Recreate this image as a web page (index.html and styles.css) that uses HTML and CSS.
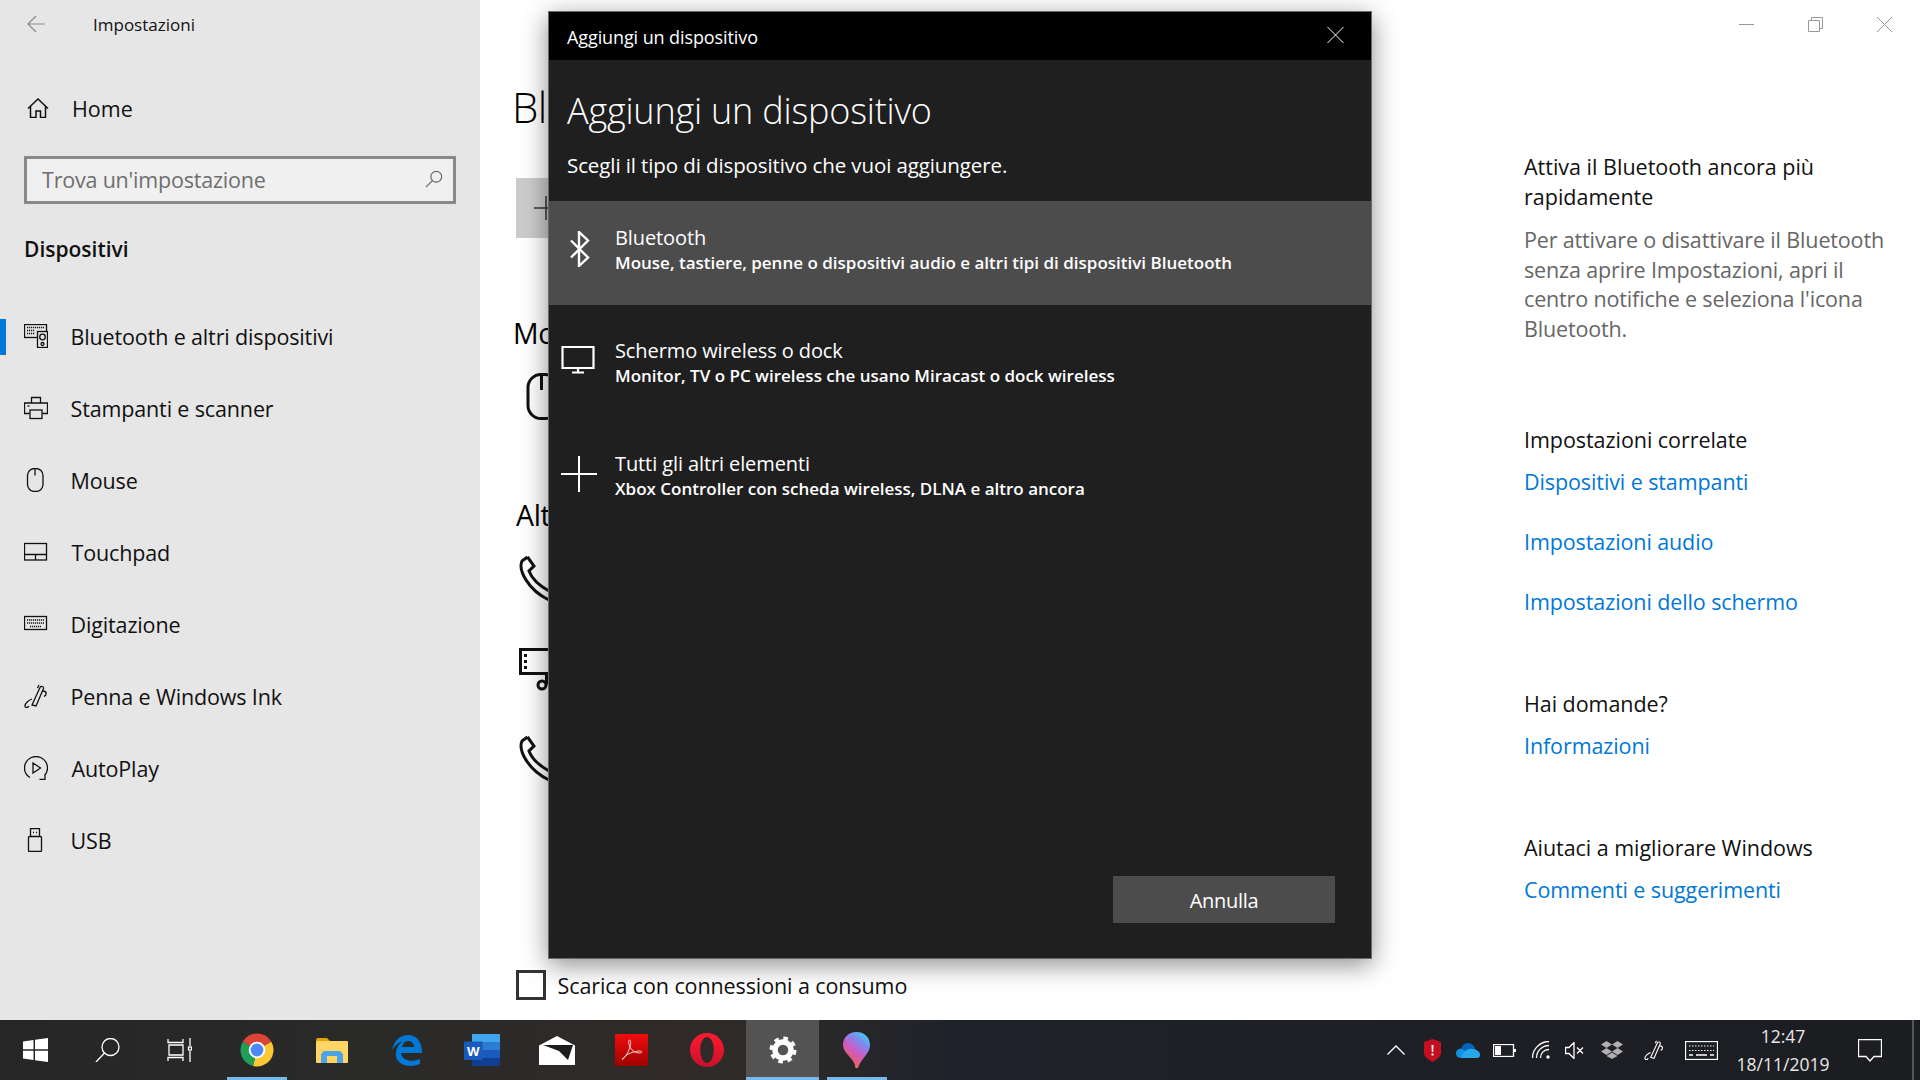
FILE: index.html
```html
<!DOCTYPE html>
<html lang="it">
<head>
<meta charset="utf-8">
<title>Impostazioni</title>
<link rel="stylesheet" href="styles.css">
</head>
<body>
<div class="window">
  <nav class="sidebar">
    <div class="app-head">
      <svg class="back" viewBox="0 0 18 18"><path d="M18 9H1M9 1L1 9l8 8"/></svg>
      <span class="app-name">Impostazioni</span>
    </div>
    <div class="home-row">
      <svg class="ico-home" viewBox="0 0 22 20"><path d="M1 10.500L11 1l10 9.500M3.500 8.500V19.500H9V13h4.500V19.500H18.500V8.500"/></svg>
      <span>Home</span>
    </div>
    <div class="search"><span>Trova un'impostazione</span>
      <svg class="ico-search" viewBox="0 0 20 20"><circle cx="12.500" cy="7.500" r="6"/><path d="M8 12L1 19"/></svg>
    </div>
    <h2 class="group">Dispositivi</h2>
    <ul class="nav">
      <li class="nav-item active">
        <svg class="nav-ico" viewBox="0 0 24 24"><rect x=".5" y=".5" width="22" height="13"/><path class="dots" d="M3 3.500h17M3 6.500h8M3 9.500h8"/><rect class="solid" x="13.500" y="7.500" width="10" height="16"/><circle cx="18.500" cy="13" r="2.800"/><circle cx="18.500" cy="20" r="1.500"/></svg>
        <span>Bluetooth e altri dispositivi</span>
      </li>
      <li class="nav-item">
        <svg class="nav-ico" viewBox="0 0 24 24"><path d="M7.500 7V1.500h9V7M5.500 17.500H.5v-10.500h23v10.500H18.500"/><rect x="6" y="14" width="12" height="8.500"/><path d="M3.500 10h2"/></svg>
        <span>Stampanti e scanner</span>
      </li>
      <li class="nav-item">
        <svg class="nav-ico" viewBox="0 0 24 24"><rect x="3.500" y=".5" width="15.500" height="23" rx="7"/><path d="M11 .5v7"/></svg>
        <span>Mouse</span>
      </li>
      <li class="nav-item tp">
        <svg class="nav-ico" viewBox="0 0 24 24"><rect x=".5" y="3.500" width="22" height="16.500"/><path d="M.5 14.500h22M11.500 14.500V20"/></svg>
        <span>Touchpad</span>
      </li>
      <li class="nav-item">
        <svg class="nav-ico" viewBox="0 0 24 24"><rect x=".5" y="4.500" width="22" height="13"/><path class="dots" d="M3 8h17M3 11h17M6 14.500h11"/></svg>
        <span>Digitazione</span>
      </li>
      <li class="nav-item">
        <svg class="nav-ico" viewBox="0 0 24 24"><path d="M8 21L16 3.500c1-2 4-1 3.500 1L12 22l-4-1zM15 1l-1.500 3M19 7c4 0 4 4 1 5.500M8 15c-3 1-7 4-7 7 0 2 3 2 4 0"/></svg>
        <span>Penna e Windows Ink</span>
      </li>
      <li class="nav-item tp">
        <svg class="nav-ico" viewBox="0 0 24 24"><path d="M6 21.500C2.500 19.500.5 16 .5 12a11.500 11.500 0 0 1 23 0c0 3-1 5.500-3 7.500M9 7l7.500 5L9 17zM15.500 23.500h5.500V18"/></svg>
        <span>AutoPlay</span>
      </li>
      <li class="nav-item">
        <svg class="nav-ico" viewBox="0 0 24 24"><rect x="4.500" y="8.500" width="13" height="15" rx="1"/><path d="M6.500 8.500V.5h9v8M9 4.500h1M12 4.500h1"/></svg>
        <span>USB</span>
      </li>
    </ul>
  </nav>

  <main class="content">
    <section class="page">
      <h1 class="page-title">Bluetooth e altri dispositivi</h1>
      <div class="add-btn">
        <svg class="ico-plus" viewBox="0 0 24 24"><path d="M0 12h24M12 0v24"/></svg>
        <span>Aggiungi dispositivo Bluetooth o di altro tipo</span>
      </div>
      <h2 class="section first">Mouse, tastiera e penna</h2>
      <svg class="dev-mouse" viewBox="0 0 30 47"><rect x="1.500" y="1.500" width="30" height="44" rx="13"/><path d="M15 1.500V17"/></svg>
      <h2 class="section second">Altri dispositivi</h2>
      <svg class="dev dev-a" viewBox="0 0 48 48"><path d="M8.500 2L3 6C-1 15 9 35 30 45M8.500 2L15 11 10 16C13 24 21 31 30 36"/></svg>
      <svg class="dev dev-b" viewBox="0 0 48 48"><path d="M1.500 1.500h40v24h-40zM6.500 6v3M6.500 12v3M6.500 18v3M27.500 25.500v11"/><circle cx="23" cy="37" r="4"/></svg>
      <svg class="dev dev-c" viewBox="0 0 48 48"><path d="M8.500 2L3 6C-1 15 9 35 30 45M8.500 2L15 11 10 16C13 24 21 31 30 36"/></svg>
      <label class="check"><span class="box"></span><span>Scarica con connessioni a consumo</span></label>
      <p class="peek">Per evitare addebiti, lascia questa opzione disattivata: il software del dispositivo non verrà scaricato</p>
    </section>
    <aside class="side">
      <div class="caption">
        <svg class="cap" viewBox="0 0 15 15"><path d="M0 7.500h15"/></svg>
        <svg class="cap" viewBox="0 0 15 15"><path d="M.5 3.500h11v11H.5zM3.500 3.500V.5h11v11h-3"/></svg>
        <svg class="cap" viewBox="0 0 15 15"><path d="M0 0l15 15M15 0L0 15"/></svg>
      </div>
      <h3 class="tip-title">Attiva il Bluetooth ancora più rapidamente</h3>
      <p class="tip-body">Per attivare o disattivare il Bluetooth senza aprire Impostazioni, apri il centro notifiche e seleziona l'icona Bluetooth.</p>
      <h3 class="side-h related">Impostazioni correlate</h3>
      <a class="side-link">Dispositivi e stampanti</a>
      <a class="side-link">Impostazioni audio</a>
      <a class="side-link">Impostazioni dello schermo</a>
      <h3 class="side-h">Hai domande?</h3>
      <a class="side-link">Informazioni</a>
      <h3 class="side-h">Aiutaci a migliorare Windows</h3>
      <a class="side-link">Commenti e suggerimenti</a>
    </aside>
  </main>
</div>

<footer class="taskbar">
  <div class="sys"><svg class="tb-win" viewBox="0 0 25 24"><path d="M0 3.400L10.500 1.900V11.300H0zM12 1.700L25 0V11.300H12zM0 12.700H10.500V22.100L0 20.600zM12 12.700H25V24L12 22.300z"/></svg></div>
  <div class="sys"><svg class="tb-line" viewBox="0 0 25 24"><circle cx="15.500" cy="9" r="8.500"/><path d="M9.500 15L1 24"/></svg></div>
  <div class="sys"><svg class="tb-line" viewBox="0 0 25 24"><path d="M1 1v3.500h15V1M2 7h14v10H2zM1 23v-3.500h15V23M23 0v8M23 13v11"/><rect x="21.500" y="9" width="3" height="3"/></svg></div>
  <div class="apps">
    <div class="app run">
      <svg class="i-chrome" viewBox="0 0 34 34"><path fill="#db4437" d="M17 17L2.700 8.700A16.500 16.500 0 0 1 31.300 8.700Z"/><path fill="#fcc934" d="M17 17L31.300 8.700A16.500 16.500 0 0 1 13 33Z"/><path fill="#1e9e56" d="M17 17L13 33A16.500 16.500 0 0 1 2.700 8.700Z"/><circle fill="#fff" cx="17" cy="17" r="8.300"/><circle fill="#4a8af4" cx="17" cy="17" r="6.400"/></svg>
    </div>
    <div class="app">
      <svg class="i-folder" viewBox="0 0 32 25"><path fill="#e2a40c" d="M0 2a2 2 0 0 1 2-2h9l3 3h-14z"/><rect fill="#ffd665" y="3" width="32" height="22" rx="1"/><path fill="#4aa5e8" d="M5 25V16l3-3h16l3 3v9h-6v-7h-10v7z"/><rect fill="#ffd665" x="11" y="18" width="10" height="7"/></svg>
    </div>
    <div class="app">
      <svg class="i-edge" viewBox="0 0 30 31"><path fill="#0078d7" fill-rule="evenodd" d="M0 15C2 5 9 0 16 0c9 0 14 7 14 18H9c1 7 9 10 19 6v5c-12 5-26 0-24-12 1-6 4-9 8-11-5 1-9 4-12 9zM10 12h12c0-4-3-6-6-6s-5 2-6 6z"/></svg>
    </div>
    <div class="app">
      <svg class="i-word" viewBox="0 0 36 32"><rect fill="#41a5ee" x="8" width="28" height="8"/><rect fill="#2b7cd3" x="8" y="8" width="28" height="8"/><rect fill="#185abd" x="8" y="16" width="28" height="8"/><rect fill="#103f91" x="8" y="24" width="28" height="8"/><rect fill="#185abd" y="7.500" width="18.500" height="18.500" rx="1"/><text class="w-letter" x="9.200" y="22">W</text></svg>
    </div>
    <div class="app">
      <svg class="i-mail" viewBox="0 0 36 29"><path fill="#fff" d="M18 0L36 9.500V29H0V9.500z"/><path fill="#1c1c1c" d="M4 9H34L29 24 20 15z"/></svg>
    </div>
    <div class="app">
      <svg class="i-acro" viewBox="0 0 33 33"><defs><linearGradient id="ag" x1="0" y1="0" x2="0" y2="1"><stop offset="0" stop-color="#f10d0c"/><stop offset="1" stop-color="#a00000"/></linearGradient></defs><rect fill="url(#ag)" width="33" height="32"/><path class="acro-s" d="M7 25c3-1 6-6 8-12 1-3 1-7-.5-7s-1 5 1 8c2 3 5 5 9 5 3 0 3-2 0-2-5 0-13 3-15 6-1 2-2 3-2.500 2z"/></svg>
    </div>
    <div class="app">
      <svg class="i-opera" viewBox="0 0 34 34"><defs><linearGradient id="og" x1="0" y1="0" x2="0" y2="1"><stop offset="0" stop-color="#ff1b2d"/><stop offset="1" stop-color="#c8102e"/></linearGradient></defs><circle fill="url(#og)" cx="17" cy="17" r="17"/><ellipse fill="#2f2a27" cx="17" cy="17" rx="6.800" ry="13"/></svg>
    </div>
    <div class="app run active">
      <svg class="i-gear" viewBox="0 0 28 28"><circle class="g-ring" cx="14" cy="14" r="8"/><circle class="g-teeth" cx="14" cy="14" r="11.500"/></svg>
    </div>
    <div class="app run">
      <svg class="i-paint" viewBox="0 0 27 36"><defs><linearGradient id="pg" x1=".9" y1="0" x2=".3" y2="1"><stop offset="0" stop-color="#35e0e8"/><stop offset=".3" stop-color="#7a8cf2"/><stop offset=".6" stop-color="#d05ac0"/><stop offset=".85" stop-color="#e8606a"/><stop offset="1" stop-color="#f4a020"/></linearGradient></defs><path fill="url(#pg)" d="M13.500 0C22 0 27 6 27 13 27 22 18 26 15 36h-2.500C12 26 0 22 0 13 0 6 5 0 13.500 0z"/></svg>
    </div>
  </div>
  <div class="tray">
    <div class="t36"><svg class="i-chev" viewBox="0 0 18 10"><path d="M.5 9.500L9 1l8.500 8.500"/></svg></div>
    <div class="t36"><svg class="i-shield" viewBox="0 0 17 23"><path fill="#c50f1f" d="M8.500 0L17 3V14C17 18 12 21 8.500 23 5 21 0 18 0 14V3z"/><path fill="#fff" d="M7.500 6h2l-.300 7H7.800zM7.500 14.500h2v2h-2z"/></svg></div>
    <div class="t36"><svg class="i-cloud" viewBox="0 0 24 15"><path fill="#0364b8" d="M5 7C5 3 8 0 12 0c3 0 6 2 7 5v3H6z"/><path fill="#1490df" d="M5 15C1 15 0 12 0 10c0-3 3-5 6-4l4 3-3 6z"/><path fill="#28a8ea" d="M5 15c2-6 6-10 11-9 2 0 8 1 8 6 0 2-1 3-3 3z"/></svg></div>
    <div class="t36"><svg class="i-batt" viewBox="0 0 23 13"><rect class="ln" x=".5" y=".5" width="20" height="12"/><rect fill="#fff" x="2" y="2" width="6" height="9"/><rect fill="#fff" x="21" y="5" width="2" height="3"/></svg></div>
    <div class="t38"><svg class="i-wifi" viewBox="0 0 18 18"><path class="ln" d="M.5 17C.5 8 8 .5 17 .5M4.500 17C4.500 10 10 4.500 17 4.500M8.500 17C8.500 12 12 8.500 17 8.500"/><circle fill="#fff" cx="16" cy="16" r="1.700"/></svg></div>
    <div class="t30"><svg class="i-spk" viewBox="0 0 20 17"><path class="ln" d="M.5 5.500H4L9 .5v16L4 11.500H.5zM12 5.500l6 6M18 5.500l-6 6"/></svg></div>
    <div class="t44"><svg class="i-drop" viewBox="0 0 22 18"><path fill="#b0b0b0" d="M5.500 0L11 3.500 5.500 7 0 3.500zM16.500 0L22 3.500 16.500 7 11 3.500zM5.500 7L11 10.500 5.500 14 0 10.500zM16.500 7L22 10.500 16.500 14 11 10.500zM11 11.500L16.500 15 11 18 5.500 15z"/></svg></div>
    <div class="t40"><svg class="i-pen" viewBox="0 0 24 24"><path class="ln" d="M8 21L16 3.500c1-2 4-1 3.500 1L12 22l-4-1zM15 1l-1.500 3M19 7c4 0 4 4 1 5.500M8 15c-3 1-7 4-7 7 0 2 3 2 4 0"/></svg></div>
    <div class="t54"><svg class="i-kbd" viewBox="0 0 33 19"><rect class="ln" x=".5" y=".5" width="32" height="18"/><path class="kd" d="M4 5h25M4 9.500h25"/><path class="ln" d="M4 14h4M11 14h11M25 14h4"/></svg></div>
    <div class="clock"><span>12:47</span><span>18/11/2019</span></div>
    <div class="t64"><svg class="i-note" viewBox="0 0 24 23"><path class="ln" d="M.5.5h23v17H16l-4 4.500-4-4.500H.5z"/></svg></div>
    <div class="desk"></div>
  </div>
</footer>

<div class="dialog">
  <div class="dlg-bar"><span>Aggiungi un dispositivo</span>
    <svg class="dlg-x" viewBox="0 0 17 16"><path d="M.5 0l16 16M16.500 0L.5 16"/></svg>
  </div>
  <h1 class="dlg-title">Aggiungi un dispositivo</h1>
  <p class="dlg-sub">Scegli il tipo di dispositivo che vuoi aggiungere.</p>
  <div class="opt hot">
    <svg class="opt-ico bt" viewBox="0 0 36 36"><path d="M10 9.500l17 17L18 35V1l9 8.500-17 17"/></svg>
    <div><div class="opt-t">Bluetooth</div><div class="opt-s">Mouse, tastiere, penne o dispositivi audio e altri tipi di dispositivi Bluetooth</div></div>
  </div>
  <div class="opt">
    <svg class="opt-ico mon" viewBox="0 0 36 36"><path d="M1.500 4h31v21h-31zM17 25v4M11 29.500h12"/></svg>
    <div><div class="opt-t">Schermo wireless o dock</div><div class="opt-s">Monitor, TV o PC wireless che usano Miracast o dock wireless</div></div>
  </div>
  <div class="opt">
    <svg class="opt-ico plus" viewBox="0 0 36 36"><path d="M0 18h36M18 0v36"/></svg>
    <div><div class="opt-t">Tutti gli altri elementi</div><div class="opt-s">Xbox Controller con scheda wireless, DLNA e altro ancora</div></div>
  </div>
  <div class="dlg-foot"><button class="cancel">Annulla</button></div>
</div>
</body>
</html>
```
FILE: styles.css
```css
* { box-sizing: border-box; }
html, body { margin: 0; height: 100%; }
body {
  width: 1920px; height: 1080px; overflow: hidden;
  display: flex; flex-direction: column;
  font-family: "Open Sans", "Noto Sans", "Liberation Sans", sans-serif;
  color: #000; background: #fff; position: relative;
}
svg { display: block; flex: none; fill: none; stroke: currentColor; }
h1, h2, h3, p, ul { margin: 0; padding: 0; font-weight: 400; }
ul { list-style: none; }

.window { flex: 1; display: flex; min-height: 0; }

/* sidebar */
.sidebar { width: 480px; flex: none; background: #e6e6e6; color: #111; }
.app-head { height: 48px; display: flex; align-items: center; padding-left: 27px; }
.back { width: 18px; height: 18px; color: #8c8c8c; stroke-width: 1.2; margin-right: 48px; }
.app-name { font-size: 17px; letter-spacing: 0; }
.home-row { height: 60px; margin-top: 30px; display: flex; align-items: center; padding-left: 27px; font-size: 21.500px; }
.ico-home { width: 22px; height: 20px; margin-right: 23px; stroke-width: 1.500; }
.search {
  margin: 18px 24px 0; height: 48px; border: 3px solid #8a8a8a; background: #f0f0f0;
  display: flex; align-items: center; justify-content: space-between;
  padding: 0 10px 2px 15px; color: #6e6e6e; font-size: 21.500px; letter-spacing: -.2px;
}
.ico-search { width: 18px; height: 18px; stroke-width: 1.300; color: #666; }
.group { margin: 29px 0 0 24px; height: 32px; line-height: 32px; font-size: 21px; font-weight: 600; }
.nav { margin-top: 35px; }
.nav-item { height: 72px; display: flex; align-items: center; padding-left: 24px; font-size: 21.500px; letter-spacing: -.14px; position: relative; }
.nav-item.active::before { content: ""; position: absolute; left: 0; top: 19px; width: 6px; height: 36px; background: #0078d7; }
.nav-ico { width: 24px; height: 24px; margin-right: 22.500px; stroke-width: 1.300; }
.nav-ico .solid { fill: #e6e6e6; }
.nav-ico .dots { stroke-dasharray: 1.200 .8; }
.tp span { margin-left: 1px; }

/* content */
.content { flex: 1; display: flex; min-width: 0; background: #fff; }
.page { width: 1044px; flex: none; padding-left: 34px; overflow: hidden; position: relative; }
.page-title { margin: 82px 0 0 -2px; width: 36px; overflow: hidden; height: 50px; line-height: 50px; font-size: 42px; font-weight: 300; letter-spacing: -.5px; white-space: nowrap; }
.add-btn { margin: 46px 0 0 2px; width: 32px; overflow: hidden; height: 60px; background: #ccc; display: flex; align-items: center; padding-left: 18px; font-size: 21px; white-space: nowrap; }
.ico-plus { width: 24px; height: 24px; stroke-width: 1.500; color: #333; margin-right: 14px; }
.section { height: 40px; line-height: 40px; font-size: 28.500px; letter-spacing: -.3px; white-space: nowrap; overflow: hidden; }
.first { margin: 75px 0 0 -1px; width: 35px; }
.second { margin: 75px 0 0 2px; width: 32px; }
.dev-mouse { width: 33px; height: 47px; margin: 20px 0 0 11px; stroke-width: 3; color: #111; overflow: visible; }
.dev { width: 48px; height: 48px; stroke-width: 3; color: #111; margin-left: 5px; }
.dev-a { margin-top: 20px; }
.dev-b { margin-top: 45px; }
.dev-c { margin-top: 39px; }
.dev-b path { stroke-linejoin: miter; }
.check { display: flex; align-items: center; margin: 187px 0 0 2px; height: 30px; font-size: 21.500px; letter-spacing: -.1px; color: #111; white-space: nowrap; }
.box { width: 30px; height: 30px; border: 3.500px solid #333; margin-right: 11.500px; }
.peek { margin: 15px 0 0 2px; font-size: 21.500px; line-height: 30px; color: #444; white-space: nowrap; }

/* right column */
.side { flex: 1; min-width: 0; padding: 0 28px 0 0; }
.caption { height: 48px; display: flex; justify-content: flex-end; align-items: flex-start; gap: 54px; padding-top: 17px; }
.cap { width: 15px; height: 15px; color: #999; stroke-width: 1; }
.tip-title { margin-top: 104px; font-size: 21.500px; line-height: 30px; color: #111; }
.tip-body { margin-top: 13px; font-size: 21.500px; line-height: 29.600px; color: #666; letter-spacing: -.15px; }
.side-h { margin-top: 72px; height: 30px; line-height: 30px; font-size: 21.500px; letter-spacing: -.05px; color: #111; white-space: nowrap; }
.side-h + .side-link { margin-top: 12px; }
.related { margin-top: 81.600px; }
.side-link { display: block; height: 30px; line-height: 30px; font-size: 21.500px; letter-spacing: -.1px; color: #0078d7; white-space: nowrap; }
.side-link + .side-link { margin-top: 30px; }

/* taskbar */
.taskbar {
  height: 60px; flex: none; display: flex; position: relative; z-index: 2;
  background: linear-gradient(90deg, #262626 0%, #2a2a29 20%, #2f2a28 35%, #2e2b29 40%, #1f222a 50%, #1e2026 70%, #1c1d21 100%);
  color: #fff;
}
.sys { width: 72px; display: flex; align-items: center; justify-content: center; padding-right: 1px; }
.tb-win { width: 25px; height: 24px; fill: #fff; stroke: none; }
.tb-line { width: 25px; height: 24px; stroke-width: 1.300; }
.apps { display: flex; margin-left: 3px; }
.app { width: 75px; display: flex; align-items: center; justify-content: center; position: relative; }
.app svg { stroke: none; }
.app.run::after { content: ""; position: absolute; left: 8px; right: 7px; bottom: 0; height: 3px; background: #76b9ed; }
.app.active { background: #535353; background-clip: content-box; padding-left: 2px; }
.app.active::after { left: 2px; right: 0; }
.i-chrome { width: 34px; height: 34px; }
.i-folder { width: 32px; height: 25px; }
.i-edge { width: 30px; height: 31px; }
.i-word { width: 36px; height: 32px; }
.w-letter { font-family: "Open Sans", sans-serif; font-size: 13px; font-weight: 700; fill: #fff; text-anchor: middle; }
.i-mail { width: 36px; height: 29px; }
.i-acro { width: 33px; height: 33px; }
.acro-s { fill: none; stroke: #f5d5d5 !important; stroke-width: 1; }
.i-opera { width: 34px; height: 34px; }
.i-gear { width: 28px; height: 28px; }
.app .g-ring { stroke: #fff; stroke-width: 5.500; }
.app .g-teeth { stroke: #fff; stroke-width: 4; stroke-dasharray: 4.500 4.530; }
.i-paint { width: 27px; height: 36px; }

.tray { margin-left: auto; display: flex; align-items: center; height: 100%; }
.tray svg { stroke: none; }
.tray .ln { stroke: #fff; stroke-width: 1.300; fill: none; }
.tray .kd { stroke: #fff; stroke-width: 1; stroke-dasharray: 1.500 1.500; }
.t30, .t36, .t38, .t40, .t44, .t54, .t64 { display: flex; align-items: center; justify-content: center; height: 100%; }
.t30 { width: 30px; } .t36 { width: 36px; } .t38 { width: 38px; } .t40 { width: 40px; }
.t44 { width: 44px; } .t54 { width: 54px; } .t64 { width: 64px; }
.tray .i-chev { width: 18px; height: 10px; stroke: #fff; stroke-width: 1.300; }
.i-shield { width: 17px; height: 23px; }
.i-cloud { width: 24px; height: 15px; }
.i-batt { width: 23px; height: 13px; }
.i-wifi { width: 18px; height: 18px; }
.i-spk { width: 20px; height: 17px; }
.i-drop { width: 22px; height: 18px; }
.i-pen { width: 20px; height: 20px; }
.i-kbd { width: 33px; height: 19px; }
.i-note { width: 24px; height: 23px; }
.clock { width: 110px; display: flex; flex-direction: column; align-items: center; font-size: 17.500px; line-height: 28px; color: #e8e8e8; }
.desk { width: 18px; height: 100%; }
.desk::before { content: ""; display: block; width: 2px; height: 100%; margin-left: 10px; background: #555; }

/* dialog */
.dialog {
  position: absolute; left: 548px; top: 11px; width: 824px; height: 948px; z-index: 1;
  background: #1f1f1f; color: #fff; display: flex; flex-direction: column;
  border: 1px solid #6a6a6a;
  box-shadow: 0 6px 24px rgba(0,0,0,.45);
}
.dlg-bar { height: 48px; flex: none; background: #000; display: flex; align-items: center; justify-content: space-between; padding: 2px 27px 0 18px; font-size: 18px; letter-spacing: -.1px; }
.dlg-x { width: 17px; height: 16px; stroke-width: 1; margin-top: -4px; }
.dlg-title { margin: 26px 0 0 18px; height: 50px; line-height: 50px; font-size: 36px; font-weight: 300; letter-spacing: -.2px; }
.dlg-sub { margin: 14px 0 1px 18px; height: 30px; line-height: 30px; font-size: 20.500px; letter-spacing: -.1px; }
.opt { margin-top: 20px; height: 104px; display: flex; padding-left: 12px; margin-bottom: -11px; }
.hot { background: #4c4c4c; }
.opt-ico { width: 36px; height: 36px; margin: 30px 18px 0 0; stroke-width: 2; }
.bt { stroke-width: 2.400; }
.mon { margin-top: 29px; stroke-width: 2.200; }
.plus { margin-top: 29px; }
.opt-t { margin-top: 23px; height: 28px; line-height: 28px; font-size: 20px; letter-spacing: -.1px; }
.opt-s { height: 22px; line-height: 22px; font-size: 17px; font-weight: 600; }
.dlg-foot { margin-top: auto; padding: 0 36px 35px 0; display: flex; justify-content: flex-end; }
.cancel { width: 222px; height: 47px; border: 0; background: #4c4c4c; color: #fff; font: inherit; font-size: 20px; letter-spacing: -.3px; padding: 2px 0 0; }
```
